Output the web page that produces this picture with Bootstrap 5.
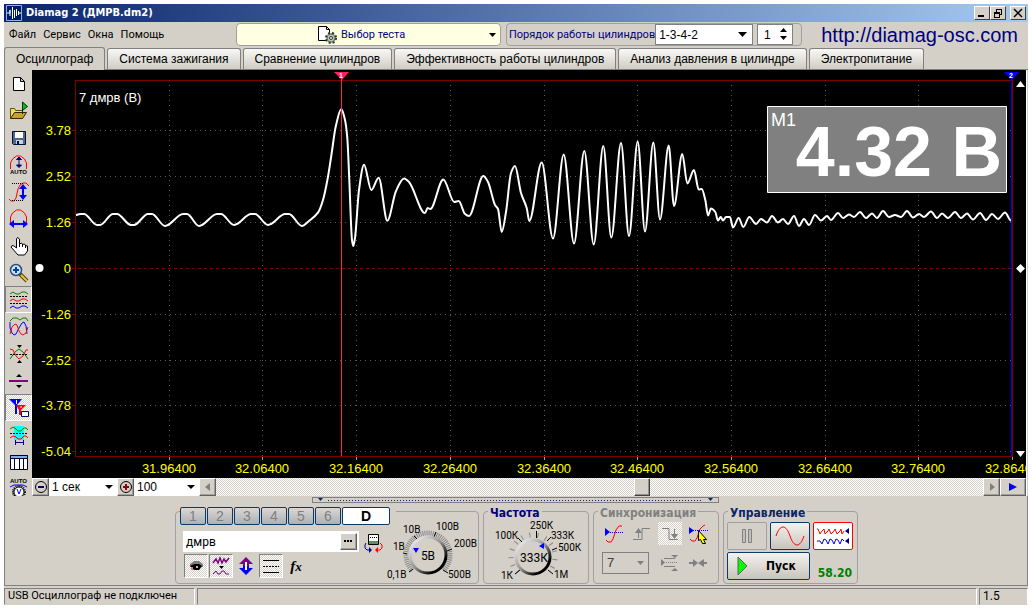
<!DOCTYPE html>
<html lang="ru">
<head>
<meta charset="utf-8">
<meta name="viewport" content="width=device-width, initial-scale=1">
<title>Diamag 2 (ДМРВ.dm2)</title>
<link rel="stylesheet" href="https://cdn.jsdelivr.net/npm/bootstrap@5.3.0/dist/css/bootstrap.min.css">
<style>
:root{--face:#d4d0c8;--navy:#000080;--edge:#0a3a6a;--hatch:repeating-conic-gradient(#fff 0 25%,#d4d0c8 0 50%) 0 0/2px 2px;
  --arrow:url("data:image/svg+xml,%3Csvg xmlns='http://www.w3.org/2000/svg' width='7' height='4'%3E%3Cpath d='M0 0h7L3.5 4z'/%3E%3C/svg%3E");
  --arrow-off:url("data:image/svg+xml,%3Csvg xmlns='http://www.w3.org/2000/svg' width='7' height='4'%3E%3Cpath fill='gray' d='M0 0h7L3.5 4z'/%3E%3C/svg%3E");
  --bold:"DejaVu Sans Condensed","DejaVu Sans",sans-serif;--arial:"Liberation Sans",Arial,sans-serif}
body{background:#fff;color:#000;font:11px/14px Roboto,sans-serif;padding:4px 4px 5px}
.app-window{min-height:calc(100vh - 9px);background:var(--face)}
button,select,input{font:inherit;color:inherit;border-radius:0;margin:0}
button{padding:0;border:0;background:var(--face);display:inline-flex;align-items:center;justify-content:center}
svg{display:block;flex:none}
select{appearance:none;border:0;background:#fff var(--arrow) no-repeat right 4px center;padding:0 14px 0 3px}
.title-bar{height:18px;background:linear-gradient(90deg,#0a246a,#a6caf0);color:#fff;font-family:var(--bold);font-weight:bold;padding:0 2px}
.title-bar button{width:16px;height:14px;border:1px solid;border-color:#fff #404040 #404040 #fff}
.menu-row{height:25px;padding-left:5px}
.menu-row nav{width:227px}
.menu-row a.item{color:#000;text-decoration:none;margin-right:7px}
.rounded-box{border:1px solid #a0a0a0;border-radius:4px;height:23px}
.test-box{background:#ffffe1;width:265px;padding-left:80px}
.test-box select{background-color:transparent;color:var(--navy);height:20px;padding-left:2px}
.order-box{width:296px;color:var(--navy);margin-left:5px;padding-left:2px}
.order-box .field{font-family:var(--arial);font-size:12px;color:#000;border:1px solid #808080;height:21px;background-color:#fff}
.order-box select{width:99px;background-size:9px 5px;background-position:right 5px center}
.order-box .spin{width:36px;padding-right:6px}
.spin input{width:22px;border:0;outline:0;background:none;padding:0 0 0 6px;appearance:textfield}
.spin input::-webkit-inner-spin-button{display:none}
.site-link{font:20px/22px var(--arial);color:var(--navy);text-decoration:none;padding-right:10px}
.main-tabs{height:23px;gap:2px;border-bottom:1px solid #808080;font:12px/18px var(--arial)}
.main-tabs button{height:21px;padding:0 11px;border:1px solid #808080;border-bottom:0;border-radius:3px 3px 0 0;background:linear-gradient(#f8f8f6,#d0ccc4);white-space:nowrap}
.main-tabs button.active{height:23px;margin-bottom:-1px;background:var(--face)}
.workspace{border-left:1px solid #808080}
.tool-col{width:27px}
.tool-col button{height:27px;width:27px}
.tool-col button:last-child{height:21px;align-items:flex-end}
.pressed{border:1px solid;border-color:#808080 #fff #fff #808080}
.hatched{background:var(--hatch)}
.plot-side{margin-right:1px;border-right:1px solid #fff}
.plot{background:#000}
.plot svg{width:100%;height:100%}
.plot text{font-family:var(--arial);font-size:13px;fill:#ff0}
.scroll-row{height:18px}
.scroll-row select{font:12px/16px var(--arial);background-size:8px 4px}
.raised{border:1px solid;border-color:#fff #606060 #606060 #fff;box-shadow:inset -1px -1px #a0a0a0}
.scroll-row button{width:17px}
.time-track{appearance:none;background:var(--hatch);min-width:0;height:18px}
.time-track::-webkit-slider-thumb{appearance:none;width:16px;height:18px;background:var(--face);border:1px solid;border-color:#fff #404040 #404040 #fff;box-shadow:inset -1px -1px #909090}
.bottom-area{border-left:1px solid #808080;border-right:1px solid #808080;border-bottom:1px solid #808080;padding:1px 0 1px 170px}
.splitter{width:407px;height:6px;border:1px solid #808080;margin-left:137px;padding:0 4px;color:#0a246a}
.splitter span{height:1px;background:repeating-linear-gradient(90deg,#0a246a 0 1px,transparent 1px 3px)}
.group{border:1px solid #a0a0a0;border-radius:4px;height:73px;margin-top:8px}
.group h2{font:bold 12px/12px var(--bold);color:var(--navy);background:var(--face);margin:-5px 0 0 4px;padding:0 2px;width:max-content}
.g-channel{width:304px}.g-freq{width:106px}.g-sync{width:126px}.g-control{width:135px}
.chan-left{width:208px}
.chan-tabs{gap:1px;margin:-5px 0 0 4px;padding-right:6px;width:max-content;background:var(--face);font:14px/16px var(--arial)}
.chan-tabs button{width:26px;height:18px;border:1px solid var(--edge);border-radius:2px;background:linear-gradient(#d8d8d8,#b0b0b0);color:#808080}
.chan-tabs button.on{width:48px;background:#fff;color:#000;font-weight:bold}
.name-box{width:176px;height:21px;background:#fff;margin:6px 0 0 7px;padding-right:2px}
.name-box input{border:0;outline:0;padding:0 3px;min-width:0;background:none;font-size:12px}
.name-box button{width:17px;height:17px}
.chan-tools{gap:1px;margin:1px 0 0 8px}
.chan-tools button{width:24px;height:24px}
.knob text{font:10px Roboto,sans-serif}
.sync-grid{display:grid;grid-template-columns:24px 24px 24px 24px;gap:6px 4px;padding:3px 0 0 8px;align-items:center}
.sync-grid button{width:24px;height:23px}
.sync-grid select{grid-column:span 2;width:47px;height:22px;border:1px solid #808080;background-color:transparent;background-image:var(--arrow-off);color:#404040;padding-left:4px;font:13px/18px var(--arial)}
.ctl-grid{display:grid;grid-template-columns:40px 40px 40px;gap:2px 3px;padding:3px 3px 0}
.ctl-grid button{height:28px;border:1px solid var(--edge);border-radius:2px;background:linear-gradient(#f4f2ee,#c8c4bc)}
.ctl-grid .start{grid-column:span 2;font:bold 12px/14px var(--bold);justify-content:flex-start;gap:18px;padding-left:9px}
.ctl-grid .off{background:var(--face);border-color:#a0a0a0}
.ctl-grid .live{background:#fff;border-color:#f00}
.ctl-grid output{color:#008000;font:bold 12px/14px var(--bold);align-self:end;text-align:right;padding-right:1px}
.status-row{height:19px;gap:2px;padding-top:2px}
.status-row div{border:1px solid;border-color:#808080 #fff transparent #808080;padding-left:3px}
.st-main{width:191px}.st-ver{width:49px;font-size:12px}
</style>
</head>
<body>
<div class="app-window d-flex flex-column">
  <header class="title-bar d-flex align-items-center">
    <svg width="16" height="16"><path fill="#001a66" stroke="#8fb0f0" d="M.5.5h15v15H.5z"/><path fill="none" stroke="#fff" d="M1 8h3V5v6M6.500 2v12M8.500 5v8M10.500 4v7M12.500 6v4M12 8h3"/></svg>
    <span class="flex-fill text-nowrap ps-1">Diamag 2 (ДМРВ.dm2)</span>
    <button aria-label="Свернуть"><svg width="10" height="10"><path d="M1 7h6v2H1z"/></svg></button>
    <button aria-label="Восстановить"><svg width="10" height="10" fill="none" stroke="#000" shape-rendering="crispEdges"><path d="M3 1.500h6M3.500 1v3M8.500 1v5h-2M1 4.500h6M1 5h6M1.500 4v5h5V4"/></svg></button>
    <button class="ms-1" aria-label="Закрыть"><svg width="10" height="10"><path stroke="#000" stroke-width="1.500" d="M1 1l8 8M9 1L1 9"/></svg></button>
  </header>

  <div class="menu-row d-flex align-items-center">
    <nav class="d-flex text-nowrap flex-shrink-0"><a class="item" href="#">Файл</a><a class="item" href="#">Сервис</a><a class="item" href="#">Окна</a><a class="item" href="#">Помощь</a></nav>
    <div class="test-box rounded-box d-flex align-items-center">
      <svg width="22" height="20"><path fill="#fff" stroke="#000" d="M1.500 1.500h8l3 3v11h-11zM9.500 1.500v3h3"/><circle cx="14" cy="13" r="5" fill="#b8c4b0" stroke="#303030" stroke-width="2" stroke-dasharray="2 2"/><circle cx="14" cy="13" r="4" fill="#b8c4b0" stroke="#607060"/><circle cx="14" cy="13" r="1.500" fill="#fff" stroke="#303030"/></svg>
      <select class="flex-fill" aria-label="Выбор теста"><option>Выбор теста</option></select>
    </div>
    <div class="order-box rounded-box d-flex align-items-center">
      <label class="flex-fill text-nowrap" for="order">Порядок работы цилиндров</label>
      <select id="order" class="field"><option>1-3-4-2</option></select>
      <div class="field spin d-flex align-items-center ms-1 me-2"><input type="number" value="1" aria-label="Цилиндр"><svg width="7" height="13"><path d="M0 4h7L3.500 0zM0 8h7l-3.500 4z"/></svg></div>
    </div>
    <a class="site-link ms-auto" href="http://diamag-osc.com">http://diamag-osc.com</a>
  </div>

  <div class="main-tabs d-flex align-items-end" role="tablist">
    <button class="active" role="tab">Осциллограф</button><button role="tab">Система зажигания</button><button role="tab">Сравнение цилиндров</button><button role="tab">Эффективность работы цилиндров</button><button role="tab">Анализ давления в цилиндре</button><button role="tab">Электропитание</button>
  </div>

  <main class="workspace d-flex flex-fill">
    <div class="tool-col d-flex flex-column" role="toolbar">
      <button aria-label="Новый"><svg width="20" height="20"><path fill="#fff" stroke="#000" d="M4.500 3.500h7l4 4v9h-11zM11.500 3.500v4h4"/></svg></button>
      <button aria-label="Открыть"><svg width="20" height="20"><path fill="#e8e070" stroke="#605000" d="M1.500 17.500v-10h4l1 2h7v3"/><path fill="#c8a030" stroke="#302800" d="M1.500 17.500l4-6h12l-4 6z"/><path fill="#00c020" stroke="#003000" d="M13.500 1l5 4.500-5 4zM13.500 9v4"/></svg></button>
      <button aria-label="Сохранить"><svg width="20" height="20"><path fill="#506888" stroke="#001040" d="M3.500 3.500h13v13h-12l-1-1z"/><path fill="#fff" d="M6 4h8v6H6z"/><path fill="#c8d0e0" d="M7 12h7v4H7z"/><path fill="#001040" d="M8 13h2v3H8z"/></svg></button>
      <button aria-label="Авто по вертикали"><svg width="20" height="22"><path fill="none" stroke="#f00" d="M1.500 15V9l2-4 4-3h4l4 3 2 4v6"/><path stroke="#000080" fill="#000080" d="M10 3.500v9M7.500 5.500L10 3l2.500 2.500zM7.500 11l2.500 2.500 2.500-2.500z"/><text x="1" y="20" font-family="Liberation Sans" font-size="6" font-weight="bold">AUTO</text></svg></button>
      <button aria-label="Амплитуда"><svg width="20" height="20"><path fill="none" stroke="#f00" d="M0 17l2 2h3l2-3 2-9 2-4 3-2h3l3 3"/><path stroke="#000" stroke-dasharray="1 1" d="M3 1.500h12M3 18.500h12"/><path fill="#00f" d="M14 2l4 5h-3v6h3l-4 5-4-5h3V7h-3z"/></svg></button>
      <button aria-label="Период"><svg width="20" height="20"><path fill="none" stroke="#f00" d="M1.500 15V8l2-4 4-3h4l4 3 2 4v7"/><path fill="#00f" d="M0 15l5-4v3h9v-3l5 4-5 4v-3H5v3z"/></svg></button>
      <button aria-label="Рука"><svg width="20" height="20"><path fill="#fff" stroke="#000" d="M7.500 12V3l1-1.500 2 1.500v5l2-1 1 1.500 2-.5 1 1.500 2 .5V15l-3 4H9l-7-8 1-1.500 2 .5zM10.500 8v3M13.500 8v3M16.500 9v3"/></svg></button>
      <button aria-label="Масштаб"><svg width="20" height="20"><path stroke="#604000" stroke-width="4" d="M11 11l7 7"/><path stroke="#e8c840" stroke-width="2" d="M12 12l6 6"/><circle cx="7" cy="7" r="5.500" fill="#c8e8ff" stroke="#304880" stroke-width="1.500"/><path stroke="#0040a0" stroke-width="2" d="M4 7h6M7 4v6"/></svg></button>
      <button class="pressed" aria-label="Раздельно"><svg width="20" height="20" fill="none"><path stroke="#008000" d="M1 4l3-2 3 2h3l3-2h3l3 2"/><path stroke="#f00" d="M1 11l3-2 3 2h3l3-2h3l3 2"/><path stroke="#00f" d="M1 18l3-2 3 2h3l3-2h3l3 2"/><path stroke="#000" stroke-dasharray="2 1" d="M1 6.500h18M1 13.500h18"/></svg></button>
      <button aria-label="Вместе"><svg width="20" height="20" fill="none"><path stroke="#008000" d="M1 4l3-3h4l3 2 3-2h3l2 3"/><path stroke="#00f" d="M1 5v6l2 5 2 2 2-1 3-6 3-5 2-1 2 4 1 8"/><path stroke="#f00" d="M1 17l2-7 3-3 2 1 2 6 2 3 2 1 3-2 2-6"/></svg></button>
      <button aria-label="Совместить"><svg width="20" height="20" fill="none"><path stroke="#008000" d="M1 15l5-7 4-3 4 3 5 7"/><path stroke="#f00" d="M1 5l3 1 3 6 3 3 4-3 3-6h2"/><path stroke="#000" stroke-dasharray="2 1" d="M1 10.500h18"/><path fill="#000" d="M8 1h5l-2.500 3zM8 19h5l-2.500-3z"/></svg></button>
      <button aria-label="По центру"><svg width="20" height="20"><path fill="#800080" d="M0 9h19v2H0z"/><path d="M7 6h6l-3-3zM7 14h6l-3 3z"/></svg></button>
      <button class="pressed hatched" aria-label="Маркеры"><svg width="22" height="22"><path fill="#00f" d="M1 2h13L9 8v9H7V8z"/><path stroke="#fff" d="M8.500 3v4"/><path fill="#f00" d="M8 8h10l-5 5v5h-2v-5z"/><path stroke="#fff" d="M12 10h2"/><path fill="#fff" stroke="#000080" d="M13.500 14.500h7v5h-7z"/></svg></button>
      <button aria-label="Интервал"><svg width="20" height="20" fill="none"><path fill="#0ff" d="M5 1h10v14H5z"/><path stroke="#008000" d="M1 4l3-2 3 2 2 2h3l3-3h2l2 2"/><path stroke="#f00" d="M1 13l3-2 3 1 2 2h3l3-3h2l2 2"/><path stroke="#000" stroke-dasharray="2 1" d="M1 8.500h18"/><path stroke="#000080" d="M6.500 15v5M14.500 15v5M6 17.500h8"/></svg></button>
      <button aria-label="Таблица"><svg width="20" height="18"><path fill="#fff" stroke="#000030" d="M1.500 2.500h17v14h-17zM5.500 5v12M10.500 5v12M14.500 5v12"/><path fill="#80b0e8" stroke="#000030" d="M1.500 2.500h17v3h-17z"/></svg></button>
      <button aria-label="Авто"><svg width="20" height="19"><text x="1" y="6" font-family="Liberation Sans" font-size="6" font-weight="bold">AUTO</text><path fill="none" stroke="#00f" d="M1 10l4-2h9l4 2"/><circle cx="10" cy="15" r="6" fill="none" stroke="#000" stroke-width="2" stroke-dasharray="1 1"/><circle cx="10" cy="15" r="5" fill="#fff" stroke="#000"/><path fill="none" stroke="#00f" d="M8 12l2 5 2-5"/></svg></button>
    </div>

    <div class="plot-side d-flex flex-column flex-fill">
      <div class="plot flex-fill">
        <svg viewBox="32 70 994 408" fill="none" role="img" aria-label="Осциллограмма">
          <g id="grid" stroke="#5a5a5a" stroke-dasharray="1 4"></g>
          <path stroke="#800000" stroke-dasharray="3 3" d="M72 268.500h940"/>
          <path stroke="#800000" d="M75.500 457V80.500h937V457M75 456.500h938"/>
          <g id="labels"></g>
          <path id="wave" stroke="#fff" stroke-width="2"/>
          <path stroke="#ff2060" d="M341.500 78v378"/><path fill="#ff2060" d="M334 72h15l-7 8z"/>
          <path stroke="#00f" d="M1011.500 78v378"/><path fill="#00f" d="M1004 72h15l-7 8z"/>
          <text x="339" y="78" style="font-size:7px;font-weight:bold;fill:#fff">1</text>
          <text x="1009" y="78" style="font-size:7px;font-weight:bold;fill:#fff">2</text>
          <path fill="#fff" d="M1016 87h9l-4.500-6zM1016 451h9l-4.500 6zM1020.500 264l4.500 4.500-4.500 4.500-4.500-4.500z"/>
          <circle cx="39.500" cy="268" r="4" fill="#fff"/>
          <text x="79" y="102" style="fill:#fff">7 дмрв (В)</text>
          <path fill="#808080" stroke="#fff" d="M767.500 106.500h239v86h-239z"/>
          <text x="771" y="126" style="font-size:18px;fill:#fff">M1</text>
          <text x="1002" y="176" text-anchor="end" style="font-size:70px;font-weight:bold;fill:#fff">4.32 В</text>
        </svg>
      </div>
      <div class="scroll-row d-flex">
        <button class="raised" aria-label="Меньше"><svg width="14" height="14"><circle cx="7" cy="7" r="5.500" fill="none" stroke="#000"/><path fill="#000080" d="M4 6h6v2H4z"/></svg></button>
        <select style="width:68px" aria-label="Время"><option>1 сек</option></select>
        <button class="raised" aria-label="Больше"><svg width="14" height="14"><circle cx="7" cy="7" r="5.500" fill="none" stroke="#000"/><path fill="#900000" d="M4 6h2V4h2v2h2v2H8v2H6V8H4z"/></svg></button>
        <select style="width:65px" aria-label="Масштаб"><option>100</option></select>
        <button class="raised" aria-label="Назад"><svg width="8" height="10"><path fill="#808080" d="M6 1v8L1 5z"/></svg></button>
        <input class="time-track flex-fill" type="range" min="0" max="754" value="420" aria-label="Прокрутка">
        <button class="raised" aria-label="Вперёд"><svg width="8" height="10"><path fill="#808080" d="M2 1v8l5-4z"/></svg></button>
        <button class="raised w-auto px-2" aria-label="Воспроизвести"><svg width="8" height="8"><path fill="#00f" d="M0 0v8l8-4z"/></svg></button>
      </div>
    </div>
  </main>

  <section class="bottom-area">
    <div class="splitter d-flex align-items-center justify-content-between gap-1"><svg width="7" height="4"><path fill="#0a246a" d="M1 0h5L3.500 3z"/></svg><span class="flex-fill"></span><svg width="7" height="4"><path fill="#0a246a" d="M1 0h5L3.500 3z"/></svg></div>
    <div class="d-flex gap-1">
      <div class="group g-channel d-flex" role="group" aria-label="Канал">
        <div class="chan-left">
          <div class="chan-tabs d-flex"><button>1</button><button>2</button><button>3</button><button>4</button><button>5</button><button>6</button><button class="on">D</button></div>
          <div class="d-flex gap-1">
            <div class="name-box d-flex align-items-center"><input class="flex-fill" type="text" value="дмрв" aria-label="Название канала"><button class="raised" aria-label="Выбрать"><svg width="9" height="3"><path d="M0 0h2v2H0zM3 0h2v2H3zM6 0h2v2H6z"/></svg></button></div>
            <svg class="mt-2" width="20" height="20" fill="none"><path fill="#fff" stroke="#000" d="M5.500 1.500h10v10h-10z"/><path fill="#609060" d="M6 8h9v3H6z"/><path stroke="#000" stroke-dasharray="1 1" d="M7 4.500h7"/><path stroke="#000080" d="M3 10l-1 2v3l2 2h3"/><path fill="#000080" d="M6 14v6l3-3z"/><path stroke="#f00" d="M17 10l2 2v3l-2 2h-3"/><path fill="#f00" d="M15 14v6l-3-3z"/></svg>
          </div>
          <div class="chan-tools d-flex">
            <button class="pressed hatched" aria-label="Показать"><svg width="16" height="14"><path fill="#808080" d="M2 5l4-3h5l4 3v3H2z"/><path fill="#000" d="M2 7l4-2h5l3 2-3 4H6z"/><path fill="#d08070" d="M3 8h2v3H3z"/><circle cx="9" cy="8" r="1" fill="#fff"/></svg></button>
            <button class="pressed hatched" aria-label="Фильтр"><svg width="20" height="20" fill="none"><path stroke="#800080" stroke-width="1.500" d="M2 7l3-4 2 4 2-5 2 5 2-4 2 3 3-4"/><path fill="#000" d="M8 10h5l-2.500 3z"/><path stroke="#800080" d="M2 18l3-3 2 3h2l2-3h2l2 3h3"/></svg></button>
            <button aria-label="Инверсия"><svg width="18" height="20"><path fill="#800080" d="M9 1l7 7h-4v2H6V8H2z"/><path fill="#00f" d="M9 19l7-7h-4v-2H6v2H2z"/><path stroke="#fff" stroke-width="2" d="M9 6v8"/></svg></button>
            <button class="pressed hatched" aria-label="Уровни"><svg width="18" height="16"><path stroke="#000" d="M1 2.500h16M1 14.500h16"/><path stroke="#000" stroke-dasharray="2 1" d="M1 8.500h16"/></svg></button>
            <button aria-label="Функция"><i style="font:italic bold 15px 'Liberation Serif',serif">f<small>x</small></i></button>
          </div>
        </div>
        <svg class="knob" width="94" height="70" viewBox="385 512 94 70">
          <defs><linearGradient id="rim" x1="0" y1="0" x2="1" y2="1"><stop offset="0" stop-color="#fff"/><stop offset=".5" stop-color="#909090"/><stop offset=".8" stop-color="#000"/></linearGradient></defs>
          <path fill="none" stroke="#8a8a8a" stroke-width="5" stroke-dasharray="1 1" d="M413.400 570.600a22 22 0 1 1 31.200 0"/>
          <path stroke="#000" d="M410 572l4-3M404 553l4 1M415 536l4 4M437 532l-2 5M453 549l-5 2M449 573l-5-3"/>
          <circle cx="429" cy="555" r="18" fill="#d4d0c8" stroke="url(#rim)" stroke-width="3"/>
          <path fill="#00f" d="M414 548h6l-3 5z"/>
          <text x="429" y="560" text-anchor="middle" style="font-size:12px">5В</text>
          <text x="404" y="533">10В</text><text x="437" y="530">100В</text><text x="394" y="550">1В</text><text x="455" y="547">200В</text><text x="388" y="578">0,1В</text><text x="449" y="578">500В</text>
        </svg>
      </div>
      <div class="group g-freq">
        <h2>Частота</h2>
        <svg class="knob" width="104" height="64" viewBox="484 518 104 64">
          <path fill="none" stroke="#8a8a8a" stroke-width="5" stroke-dasharray="1 7" d="M517.500 571.500a22 22 0 1 1 31 0"/>
          <path stroke="#000" d="M515 573l5-4M518 537l4 4M536.500 530v7M551 536l-4 4M557 547l-5 2M553 573l-5-4"/>
          <circle cx="533" cy="556" r="17" fill="#d4d0c8" stroke="url(#rim)" stroke-width="3"/>
          <path fill="#00f" d="M539 545l5-3v6z"/>
          <text x="534" y="561" text-anchor="middle" style="font-size:12px">333К</text>
          <text x="530" y="528">250К</text><text x="495" y="538">100К</text><text x="551" y="538">333К</text><text x="558" y="550">500К</text><text x="501" y="578">1К</text><text x="554" y="577">1М</text>
        </svg>
      </div>
      <div class="group g-sync">
        <h2 style="color:#808080">Синхронизация</h2>
        <div class="sync-grid">
          <button aria-label="Уровень"><svg width="20" height="20"><path fill="none" stroke="#f00" d="M2 16l2 2h3l2-3 3-9 3-4h3"/><path stroke="#00f" stroke-dasharray="1 1" d="M4 8.500h15"/><path fill="#00f" d="M1 4v8l5-4z"/></svg></button>
          <button aria-label="Фронт"><svg width="20" height="18"><path fill="none" stroke="#808080" d="M1 14.500h9v-11h8M6.500 13V5"/><path fill="#808080" d="M3 8h7L6.500 3z"/></svg></button>
          <button class="hatched" aria-label="Спад"><svg width="20" height="18"><path fill="none" stroke="#808080" d="M2 3.500h7v11h9M14.500 4v8"/><path fill="#808080" d="M11 9h7l-3.500 5z"/></svg></button>
          <button aria-label="Захват"><svg width="20" height="20"><path fill="none" stroke="#f00" d="M2 15l2 2h3l2-3 3-9 3-3 2-1"/><path stroke="#00f" stroke-dasharray="1 1" d="M3 6.500h17"/><path fill="#00f" d="M1 3v7l5-3.500z"/><path fill="#ff0" stroke="#000" d="M10.500 6.500v10l2-1 2 4h3l-2-4h3z"/></svg></button>
          <select aria-label="Канал синхронизации"><option>7</option></select>
          <button aria-label="Гистерезис"><svg width="20" height="18" fill="none" stroke="#808080"><path d="M4 4.500h11M4 12.500h11"/><path stroke-dasharray="1 1" d="M6 8.500h12"/><path fill="#808080" stroke="none" d="M1 5v7l4-3.500zM11 1h7l-3 3zM11 17h7l-3-3z"/></svg></button>
          <button aria-label="К центру"><svg width="20" height="12"><path fill="#808080" d="M1 5h4V2l5 4-5 4V7H1zM19 5h-3V2l-6 4 6 4V7h3z"/></svg></button>
        </div>
      </div>
      <div class="group g-control">
        <h2 style="color:#0a246a">Управление</h2>
        <div class="ctl-grid">
          <button class="off" aria-label="Пауза"><svg width="14" height="16"><path fill="#c0c0c0" stroke="#808080" d="M2.500 1.500h3v13h-3zM8.500 1.500h3v13h-3z"/></svg></button>
          <button aria-label="Синус"><svg width="30" height="22"><path fill="none" stroke="#f00" d="M1 11c4-12 10-12 14 0s10 12 14 0"/></svg></button>
          <button class="live" aria-label="Запись"><svg width="34" height="20" fill="none"><path stroke="#f00" d="M1 3h1l2 5 2-3 2-2 1 5 3-3 1-2 2 5 3-3 1-2 2 5 3-3 1-2 1 5 2-3"/><path stroke="#00f" d="M1 15h3l2 3 2-5 2 1 2 4 2-5 2 1 2 4 2-5 2 1 2 4 2-5 2 2"/><path fill="#000080" d="M33 2v6l-4-3zM33 12v6l-4-3z"/></svg></button>
          <button class="start"><svg width="11" height="20"><path fill="#0f0" stroke="#606060" d="M1 1v18l9-9z"/></svg>Пуск</button>
          <output>58.20</output>
        </div>
      </div>
    </div>
  </section>

  <footer class="status-row d-flex text-nowrap"><div class="st-main">USB Осциллограф не подключен</div><div class="flex-fill"></div><div class="st-ver">1.5</div></footer>
</div>
<script src="https://cdn.jsdelivr.net/npm/bootstrap@5.3.0/dist/js/bootstrap.bundle.min.js"></script>
<script>
// Grid lines and axis labels
const xs=[169,262,356,450,544,637,731,825,918,1012], ys=[[130,'3.78'],[176,'2.52'],[222,'1.26'],[268,'0'],[314,'-1.26'],[360,'-2.52'],[405,'-3.78'],[451,'-5.04']];
let grid='',labels='';
xs.forEach((x,i)=>{ if(i<9) grid+=`<path d="M${x+.5} 85v371"/>`;
  labels+=`<path stroke="#a0a0a0" d="M${x+.5} 457v3"/><text x="${x}" y="473" text-anchor="middle">${(31.964+i*.1).toFixed(5)}</text>`; });
ys.forEach(([y,t])=>{ if(t!=='0') grid+=`<path d="M80 ${y+.5}h931"/>`;
  labels+=`<path stroke="#800000" d="M72 ${y+.5}h4"/><text x="71" y="${y+5}" text-anchor="end">${t}</text>`; });
document.getElementById('grid').innerHTML=grid;
document.getElementById('labels').innerHTML=labels;

// Sensor signal, drawn as a monotone cubic through its samples
const s=`76 215,80 214,84 214,97 225,100 225,113 214,117 214,131 225,134 225,148 214,152 214,165 226,168 225,183 214,187 214,199 226,202 225,217 214,221 214,234 225,237 224,251 214,255 214,268 225,271 224,285 214,289 214,302 226,309 221,318 212.7,323 200,328 176.700,331.700 153,335.700 126.700,341.300 109,345 120,347.300 138,349.300 180,352 240,353.300 246,355 238,359 190,364 164.700,371.300 190,378.700 177.700,387.300 220.700,396 191,404 178.500,409 182,425 213,427.700 208,430.300 209,443.300 179.500,454.300 202,458.700 201,465 214,469 216,483.300 176,488 182,495 205,498 209,501.700 232,506 212,511 173,515 166,521 193,526.700 208,529.300 221,541.700 162.500,553 238.500,563.700 154.500,574 243.500,584.300 151,593.700 244.500,603.300 146,611.300 237.500,621 143,629 236,637.700 141.500,645 231.500,653.300 142.500,660 219.500,668.700 145.500,674 206,682.300 154,687.300 183.500,694 170,698.700 189.500,701.700 189,705.300 200,708 215.500,711 208.500,715.300 212,718 220.500,720.700 217,723 220.500,726 217,730 217,733 227.500,738.700 218,743.300 227,749.300 217,756 224,761 219,767 222.500,772 216,778 222.500,783 219,788 224,794 216,799 226,804 219,809 225,815 215,821 220.500,827 216,831 220,838 213,843 218,849 214.500,854 217,860 212,866 218,872 213.500,877 218,883 211,889 217,895 215,901 217,907 211,913 217.500,919 214,924 217,931 211.500,937 218,942 213.500,948 218,955 212,961 218,967 213.500,973 219.500,980 213,986 220,992 214,998 219,1005 212.500,1011 220.500`
  .split(',').map(p=>p.trim().split(' ').map(Number));
const slope=i=>(s[i+1][1]-s[i][1])/(s[i+1][0]-s[i][0]);
const tan=s.map((p,i)=>{ if(!i||i===s.length-1) return 0; const a=slope(i-1),b=slope(i); return a*b<=0?0:2*a*b/(a+b); });
let d=`M${s[0]}`;
for(let i=1;i<s.length;i++){ const [x0,y0]=s[i-1],[x1,y1]=s[i],h=(x1-x0)/3; d+=`C${x0+h} ${y0+h*tan[i-1]} ${x1-h} ${y1-h*tan[i]} ${x1} ${y1}`; }
document.getElementById('wave').setAttribute('d',d);
</script>
</body>
</html>
